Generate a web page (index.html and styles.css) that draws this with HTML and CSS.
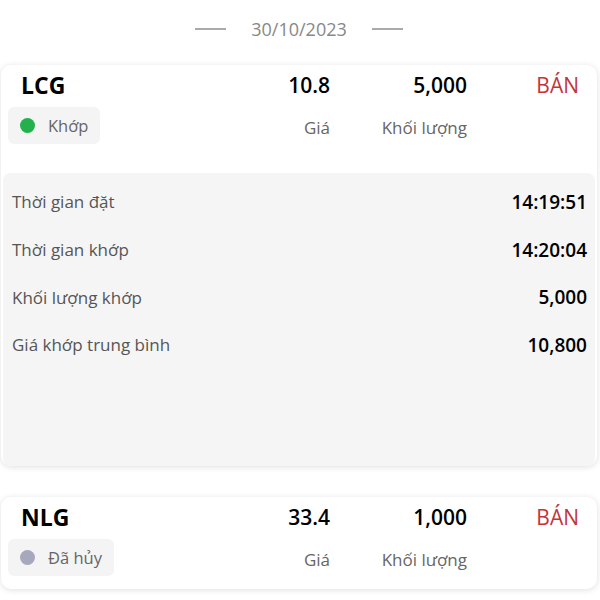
FILE: index.html
```html
<!DOCTYPE html>
<html lang="vi">
<head>
    <meta charset="UTF-8">
    <meta name="viewport" content="width=device-width, initial-scale=1.0">
    <title>Sổ lệnh</title>
    <link rel="stylesheet" href="styles.css">
</head>
<body>
    <div class="date-row">
        <span class="date-line"></span>
        <span class="date">30/10/2023</span>
        <span class="date-line"></span>
    </div>

    <div class="order">
        <div class="order-head">
            <div class="symbol">LCG</div>
            <div class="num">10.8</div>
            <div class="num">5,000</div>
            <div class="side">BÁN</div>
            <div><span class="status"><span class="dot dot-done"></span>Khớp</span></div>
            <div class="cap">Giá</div>
            <div class="cap">Khối lượng</div>
            <div></div>
        </div>
        <div class="detail">
            <div class="detail-row"><span class="label">Thời gian đặt</span><span class="value">14:19:51</span></div>
            <div class="detail-row"><span class="label">Thời gian khớp</span><span class="value">14:20:04</span></div>
            <div class="detail-row"><span class="label">Khối lượng khớp</span><span class="value">5,000</span></div>
            <div class="detail-row"><span class="label">Giá khớp trung bình</span><span class="value">10,800</span></div>
        </div>
    </div>

    <div class="order">
        <div class="order-head">
            <div class="symbol">NLG</div>
            <div class="num">33.4</div>
            <div class="num">1,000</div>
            <div class="side">BÁN</div>
            <div><span class="status"><span class="dot dot-cancel"></span>Đã hủy</span></div>
            <div class="cap">Giá</div>
            <div class="cap">Khối lượng</div>
            <div></div>
        </div>
    </div>
</body>
</html>
```

FILE: styles.css
```css
body { margin: 0; padding: 0 3px 0 1px; font-family: "Open Sans", "Noto Sans", sans-serif; color: #111; background: #fff; }

.date-row { height: 56px; margin-bottom: 8px; display: flex; align-items: center; justify-content: center; gap: 25px; padding-top: 1px; }
.date { font-size: 18px; color: #888; }
.date-line { width: 31px; height: 2px; background: #aaa; }

.order { background: #fff; border-radius: 10px; box-shadow: 0 1px 6px rgba(0, 0, 0, 0.13); margin-bottom: 31px; }
.order-head { display: grid; grid-template-columns: 1fr 110px 137px 112px; grid-template-rows: 28px 37px; row-gap: 8px; padding: 6px 18px 13px 7px; align-items: center; }
.symbol { font-size: 23px; font-weight: 700; padding-left: 13px; color: #000; }
.num { font-size: 21px; font-weight: 600; text-align: right; color: #000; }
.side { font-size: 21px; text-align: right; color: #c4343a; }
.cap { font-size: 17px; color: #666; text-align: right; padding-top: 4px; }

.status { display: inline-flex; align-items: center; gap: 13px; height: 37px; padding: 0 12px; background: #f4f4f4; border-radius: 6px; font-size: 16.5px; color: #666; }
.dot { width: 15px; height: 15px; border-radius: 50%; }
.dot-done { background: #22b14c; }
.dot-cancel { background: #a7a7bd; }

.detail { background: #f5f5f5; border-radius: 8px; margin: 16px 2px 2px; padding: 5px 8px 0 9px; min-height: 288px; }
.detail-row { height: 47.7px; display: flex; align-items: center; justify-content: space-between; }
.label { font-size: 17px; color: #555; }
.value { font-size: 19px; font-weight: 600; color: #000; }
```
